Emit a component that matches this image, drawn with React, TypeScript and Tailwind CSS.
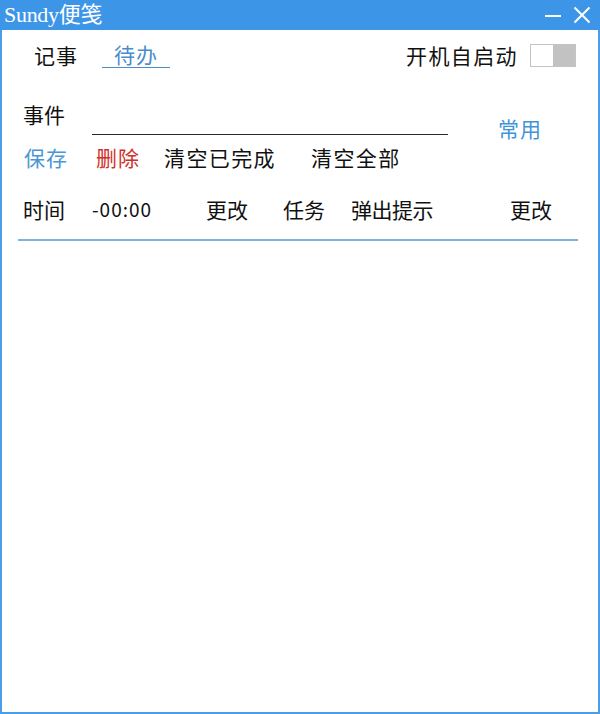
import React from "react";

const cjk = { fontFamily: '"Noto Sans CJK SC", "Noto Sans", sans-serif' };

export default function App() {
  return (
    <div className="w-[600px] h-[714px] bg-white box-border border-2 border-t-0 border-[#4a9de8] flex flex-col" style={cjk}>
      {/* title bar */}
      <div className="h-[30px] -mx-[2px] bg-[#3d95e8] flex items-center text-white shrink-0">
        <span
          className="pl-[4px] text-[22px] leading-[30px] tracking-[-0.3px]"
          style={{ fontFamily: '"Liberation Serif", "Noto Sans CJK SC", serif' }}
        >
          Sundy便笺
        </span>
        <div className="ml-auto flex items-center mr-[9px] gap-[12px]">
          <div className="w-[16px] h-[2px] bg-white mt-[1px]" />
          <svg width="18" height="18" viewBox="0 0 18 18" className="mb-[1px]">
            <path d="M1.5 1.5 L16.5 16.5 M16.5 1.5 L1.5 16.5" stroke="white" strokeWidth="2" />
          </svg>
        </div>
      </div>

      {/* row 1 */}
      <div className="flex items-center mt-[10px] h-[30px] pl-[32px] pr-[22px]">
        <span className="w-[68px] text-[21px] leading-[24px] tracking-[1px] text-[#111]">记事</span>
        <span className="px-[12px] text-[21px] leading-[24px] tracking-[1px] text-[#4a8ccc] border-b-[1.5px] border-[#4a8ccc] pb-[1px]">
          待办
        </span>
        <span className="ml-auto text-[21px] leading-[24px] tracking-[1.4px] text-[#111]">开机自启动</span>
        <div className="ml-[12px] w-[46px] h-[23px] mt-[1px] border border-[#c4c4c4] flex box-border">
          <div className="flex-1 bg-white" />
          <div className="flex-1 bg-[#c2c2c2]" />
        </div>
      </div>

      {/* row 2 */}
      <div className="flex items-start mt-[32px] pl-[21px]">
        <span className="w-[69px] text-[21px] leading-[24px] text-[#111]">事件</span>
        <div className="w-[356px] h-[33px] border-b-[1.5px] border-[#2a2a2a]" />
        <span className="ml-[50px] mt-[14px] text-[21px] leading-[24px] tracking-[1px] text-[#3f95d8]">常用</span>
      </div>

      {/* row 3 */}
      <div className="flex items-center mt-[4px] pl-[22px] h-[26px]">
        <span className="w-[72px] text-[21px] leading-[24px] tracking-[1px] text-[#4b96d4]">保存</span>
        <span className="w-[68px] text-[21px] leading-[24px] tracking-[1px] text-[#cf2f28]">删除</span>
        <span className="w-[147px] text-[21px] leading-[24px] tracking-[1.4px] text-[#111]">清空已完成</span>
        <span className="text-[21px] leading-[24px] tracking-[1.4px] text-[#111]">清空全部</span>
      </div>

      {/* row 4 */}
      <div className="flex items-center mt-[26px] pl-[21px] h-[26px] text-[#111]">
        <span className="w-[69px] text-[21px] leading-[24px]">时间</span>
        <span className="w-[114px] text-[19px] leading-[24px] tracking-[1px]">-00:00</span>
        <span className="w-[77px] text-[21px] leading-[24px]">更改</span>
        <span className="w-[68px] text-[21px] leading-[24px]">任务</span>
        <span className="w-[159px] text-[21px] leading-[24px] tracking-[-0.5px]">弹出提示</span>
        <span className="text-[21px] leading-[24px]">更改</span>
      </div>

      {/* separator */}
      <div className="mt-[17px] ml-[16px] w-[560px] h-[2px] bg-[#7cb5de]" />

      <div className="flex-1" />
    </div>
  );
}
